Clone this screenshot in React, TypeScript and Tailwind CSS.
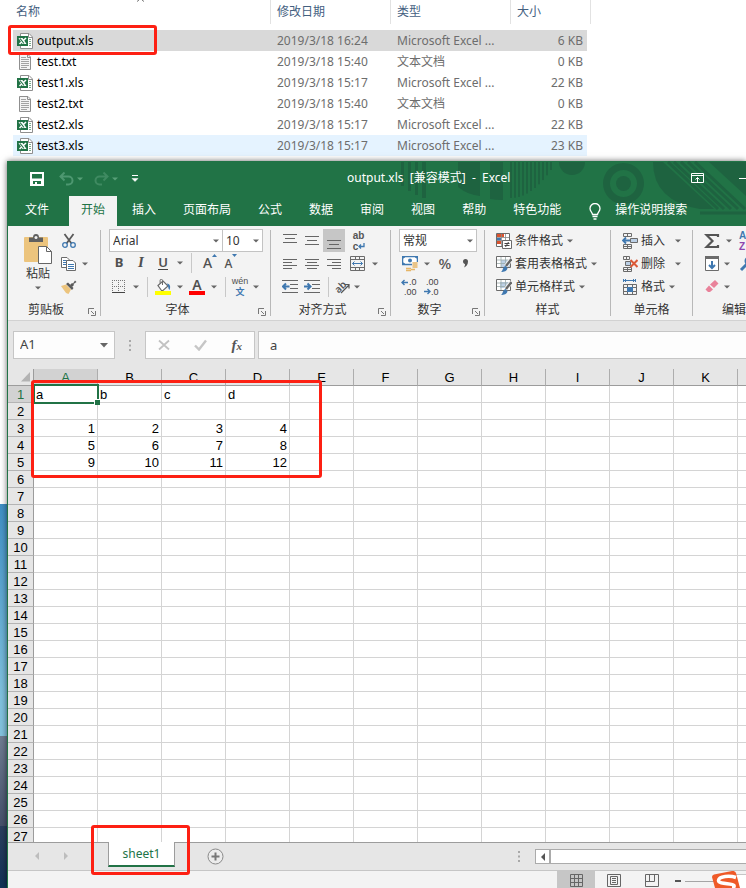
import React from 'react';

type Kids = { children?: React.ReactNode };

const BLUE = '#3f78b0';
const GREY = '#6b6b6b';

function Svg({ w = 16, h = 16, children }: Kids & { w?: number; h?: number }) {
  return (
    <svg width={w} height={h} viewBox={`0 0 ${w} ${h}`} fill="none" className="shrink-0" aria-hidden="true">
      {children}
    </svg>
  );
}

/* ---------- file list ---------- */

function XlsIcon() {
  return (
    <Svg>
      <path d="M3.500.5H12L15.500 4v11.500h-12z" fill="#fff" stroke="#8f8f8f" />
      <path d="M11.500.5V4.500h4" stroke="#8f8f8f" />
      <path d="M12 6.500h2M12 8.500h2M12 10.500h2M12 12.500h2" stroke="#79a98c" />
      <rect y="3" width="11" height="10" fill="#217346" />
      <path d="M1.500 5h4L9.500 11h-4z" fill="#fff" />
      <path d="M9 5L2.500 11" stroke="#fff" strokeWidth="1.600" />
      <path d="M3 5.500l4 5" stroke="#217346" strokeWidth="1.200" />
    </Svg>
  );
}

function TxtIcon() {
  return (
    <Svg>
      <path d="M2.500.5H11l2.500 2.500v12.500h-11z" fill="#f4f4f4" stroke="#8f8f8f" />
      <path d="M10.500.5v3h3" stroke="#8f8f8f" />
      <path d="M4 3.500h5M4 5.500h8M4 7.500h8M4 9.500h8M4 11.500h8M4 13.500h6" stroke="#a3a3a3" />
    </Svg>
  );
}

const files = [
  { name: 'output.xls', date: '2019/3/18 16:24', type: 'Microsoft Excel ...', size: '6 KB', tone: 'bg-[#d9d9d9]' },
  { name: 'test.txt', date: '2019/3/18 15:40', type: '文本文档', size: '0 KB', tone: '' },
  { name: 'test1.xls', date: '2019/3/18 15:17', type: 'Microsoft Excel ...', size: '22 KB', tone: '' },
  { name: 'test2.txt', date: '2019/3/18 15:40', type: '文本文档', size: '0 KB', tone: '' },
  { name: 'test2.xls', date: '2019/3/18 15:17', type: 'Microsoft Excel ...', size: '22 KB', tone: '' },
  { name: 'test3.xls', date: '2019/3/18 15:17', type: 'Microsoft Excel ...', size: '23 KB', tone: 'bg-[#e5f3ff]' },
];

function Explorer() {
  return (
    <section className="relative h-[161px] shrink-0 pl-[13px]">
      <svg className="absolute left-[136px] top-0" width="9" height="2" viewBox="0 0 9 2" aria-hidden="true">
        <path d="M1 1.500L3 0M8 1.500L6 0" stroke="#777" />
      </svg>
      <table className="w-[578px] table-fixed border-separate border-spacing-0 text-left">
        <colgroup>
          <col className="w-[258px]" />
          <col className="w-[120px]" />
          <col className="w-[120px]" />
          <col className="w-20" />
        </colgroup>
        <thead className="text-[#44607f]">
          <tr className="h-6">
            {['名称', '修改日期', '类型', '大小'].map((t, i) => (
              <th key={t} scope="col" className={`border-r border-[#e2e2e2] p-0 pb-px font-normal leading-5 ${i ? 'pl-1.5' : 'pl-[3px]'}`}>
                {t}
              </th>
            ))}
          </tr>
        </thead>
        <tbody className="text-[#6d6d6d]">
          <tr className="h-1.5">
            <td colSpan={4} className="p-0" />
          </tr>
          {files.map((f) => (
            <tr key={f.name} className="h-[21px]">
              <td className={`p-0 pl-1 text-black ${f.tone}`}>
                <span className="flex items-center gap-1">
                  {f.name.endsWith('xls') ? <XlsIcon /> : <TxtIcon />}
                  {f.name}
                </span>
              </td>
              <td className={`p-0 pl-1.5 ${f.tone}`}>{f.date}</td>
              <td className={`p-0 pl-1.5 ${f.tone}`}>{f.type}</td>
              <td className={`border-r-4 border-transparent bg-clip-padding p-0 pr-1 text-right ${f.tone}`}>{f.size}</td>
            </tr>
          ))}
        </tbody>
      </table>
      <Mark className="left-2 top-[25px] h-[30px] w-[149px]" />
    </section>
  );
}

/* red highlight frame */
function Mark({ className }: { className: string }) {
  return <div className={`pointer-events-none absolute z-20 rounded-[3px] border-3 border-[#fd2013] ${className}`} />;
}

/* ---------- title bar ---------- */

function Pattern() {
  const thin = [0, 1, 2, 3, 4, 5, 6, 7, 8, 9, 10];
  return (
    <svg className="absolute left-[392px] top-0" width="346" height="65" viewBox="400 161 346 65" aria-hidden="true">
      <g fill="#1e6340">
        <rect x="401" y="162" width="3" height="24" />
        <rect x="408" y="162" width="3" height="29" />
        <rect x="415" y="162" width="3" height="33" />
        <rect x="422" y="162" width="4" height="36" />
        <path d="M458 162h22v34q-12-1-22-9z" />
        <path d="M490 162h13v38q-8 0-13-1z" />
        {thin.map((i) => (
          <rect key={i} x={510 + i * 4} y="162" width="2" height={36 - i * i * 0.28} />
        ))}
        <path d="M559 162h26a13 13 0 0 1-26 0z" />
        <path fillRule="evenodd" d="M603 183.500a20.500 20.500 0 1 0 41 0a20.500 20.500 0 1 0-41 0zM610 183.500a13.500 13.500 0 1 1 27 0a13.500 13.500 0 1 1-27 0z" />
        <circle cx="623.500" cy="183.500" r="7.500" />
        <path d="M653 162h10l51 47h-14q-47-8-47-47z" />
        <path d="M709 162h37v34z" />
      </g>
      <path d="M668 162l50 47M674 162l50 47M681 162l50 47M688 162l50 47M695 162l50 47" stroke="#1e6340" strokeWidth="3" />
      <path d="M700 213h46" stroke="#1e6340" strokeWidth="3" />
    </svg>
  );
}

function Caret({ className = 'w-3', color = '#666' }: { className?: string; color?: string }) {
  return (
    <span className={`flex shrink-0 items-center justify-center ${className}`}>
      <Svg w={6} h={4}>
        <path d="M0 .5h6L3 3.500z" fill={color} />
      </Svg>
    </span>
  );
}

function TitleBar() {
  return (
    <div className="relative flex h-[35px] items-center pb-0.5">
      <div className="flex w-[339px] shrink-0 items-center pl-[22px] pt-0.5">
        <button aria-label="保存">
          <Svg w={14} h={14}>
            <path d="M0 0h14v14H0zM2 2v4.500h10V2zM3 9v3h2v-2h2v2h4V9z" fill="#fff" fillRule="evenodd" />
          </Svg>
        </button>
        <button aria-label="撤消" className="ml-[15px] flex items-center">
          <Svg w={15} h={14}>
            <path d="M1 4.500h8.500a4 4 0 0 1 0 8H7M5.500.5l-4 4l4 4" stroke="#4d9770" strokeWidth="2" />
          </Svg>
          <Caret color="#58a078" />
        </button>
        <button aria-label="恢复" className="ml-2 flex items-center">
          <Svg w={15} h={14}>
            <path d="M14 4.500H5.500a4 4 0 0 0 0 8H8M9.500.5l4 4l-4 4" stroke="#3f8a61" strokeWidth="2" />
          </Svg>
          <Caret color="#58a078" />
        </button>
        <button aria-label="自定义快速访问工具栏" className="ml-2.5">
          <Svg w={8} h={8}>
            <path d="M1 .5h6" stroke="#fff" />
            <path d="M1 3.500h6L4 6.500z" fill="#fff" stroke="#fff" strokeWidth=".5" />
          </Svg>
        </button>
      </div>
      <h1 className="relative whitespace-pre text-white">{'output.xls  [兼容模式]  -  Excel'}</h1>
      <div className="relative ml-auto flex items-center gap-[34px]">
        <button aria-label="功能区显示选项">
          <Svg w={13} h={10}>
            <path d="M.5.5h12v9H.5zM1 2.500h11M6.500 9V4.500M4.500 6.500l2-2l2 2" stroke="#fff" />
          </Svg>
        </button>
        <button aria-label="最小化">
          <Svg w={8} h={10}>
            <path d="M1 5.500h7" stroke="#fff" />
          </Svg>
        </button>
      </div>
    </div>
  );
}

const tabs = ['插入', '页面布局', '公式', '数据', '审阅', '视图', '帮助', '特色功能'];

function TabBar() {
  return (
    <nav className="relative flex h-[30px] items-stretch gap-[3px] whitespace-nowrap pl-[5px] text-white">
      <button className="mr-[5px] px-3 pb-0.5">文件</button>
      <button className="bg-[#f3f3f3] px-3 pb-0.5 text-[#217346]">开始</button>
      {tabs.map((t) => (
        <button key={t} className="px-3 pb-0.5">
          {t}
        </button>
      ))}
      <button className="ml-3 flex items-center gap-[13px] pb-0.5">
        <span className="pt-0.5">
          <Svg w={14} h={17}>
            <path d="M4.500 11.500c0-2-2.500-3-2.500-6a5 5 0 0 1 10 0c0 3-2.500 4-2.500 6zM4.500 13.500h5M5.500 16h3" stroke="#fff" strokeWidth="1.300" />
          </Svg>
        </span>
        操作说明搜索
      </button>
    </nav>
  );
}

/* ---------- ribbon ---------- */

function Launcher() {
  return (
    <button aria-label="对话框启动器" className="flex w-4 shrink-0 items-center justify-center pt-1">
      <Svg w={8} h={8}>
        <path d="M.5 6V.5H6M3 3l3 3M7.500 3v4.500H3" stroke="#777" />
      </Svg>
    </button>
  );
}

function Group({ label, width, launcher, children }: Kids & { label: string; width: string; launcher?: boolean }) {
  return (
    <section className={`flex shrink-0 flex-col pt-[3px] ${width}`}>
      {children}
      <div className="flex h-[22px] items-center pt-0.5 text-[#333]">
        <span className="flex-1 text-center">{label}</span>
        {launcher && <Launcher />}
      </div>
    </section>
  );
}

function Row({ className = '', children }: Kids & { className?: string }) {
  return <div className={`flex h-[23px] items-center ${className}`}>{children}</div>;
}

function Tool({ label, className = 'w-[22px]', children }: Kids & { label: string; className?: string }) {
  return (
    <button aria-label={label} className={`flex h-full shrink-0 items-center justify-center ${className}`}>
      {children}
    </button>
  );
}

const GroupLine = () => <div className="my-1 w-px shrink-0 bg-[#b8b8b8]" />;
const Divider = () => (
  <span className="flex h-5 w-2.5 shrink-0 justify-center">
    <span className="w-px bg-[#c8c8c8]" />
  </span>
);

function Picker({ label, value, className }: { label: string; value: string; className: string }) {
  return (
    <span className={`relative flex h-[23px] shrink-0 border border-[#c3c3c3] bg-white ${className}`}>
      <select aria-label={label} className="w-full appearance-none bg-transparent pl-[3px] text-[#333] outline-none">
        <option>{value}</option>
      </select>
      <span className="pointer-events-none absolute inset-y-0 right-0 flex">
        <Caret />
      </span>
    </span>
  );
}

function Lines({ y, x, w }: { y: number[]; x?: number[]; w?: number[] }) {
  return (
    <Svg>
      {y.map((v, i) => (
        <rect key={v} x={x ? x[i] : 1} y={v} width={w ? w[i] : 14} height="1" fill="#666" />
      ))}
    </Svg>
  );
}

function Clipboard() {
  return (
    <Group label="剪贴板" width="w-[92px]" launcher>
      <div className="flex h-[69px]">
        <button className="flex w-[53px] shrink-0 flex-col items-center pl-[7px] pt-[5px] text-[#333]">
          <Svg w={28} h={30}>
            <rect y="3" width="24" height="25" rx="1" fill="#ecc47d" />
            <path d="M5 8V3.500h4C9 1 10 0 12 0s3 1 3 3.500h4V8z" fill="#5f5f5f" />
            <circle cx="12" cy="3.500" r="1.500" fill="#f3f3f3" />
            <path d="M14.500 12.500h8l5 5v12h-13z" fill="#fff" stroke="#666" />
            <path d="M22.500 12.500v5h5" stroke="#666" />
          </Svg>
          <span className="whitespace-nowrap leading-5">粘贴</span>
          <Caret className="h-2 w-3" />
        </button>
        <div className="flex w-[38px] shrink-0 flex-col">
          <Row>
            <Tool label="剪切" className="w-4">
              <Svg>
                <path d="M3.500 1l7 9.500M12.500 1l-7 9.500" stroke="#595959" strokeWidth="1.800" />
                <circle cx="4" cy="12" r="2.300" stroke={BLUE} strokeWidth="1.300" />
                <circle cx="12" cy="12" r="2.300" stroke={BLUE} strokeWidth="1.300" />
              </Svg>
            </Tool>
          </Row>
          <Row>
            <Tool label="复制" className="w-4">
              <Svg>
                <path d="M.5 1.500H6l2.500 2.500v7.500h-8z" fill="#fff" stroke={GREY} />
                <path d="M2 4.500h4M2 6.500h4M2 8.500h4" stroke={BLUE} />
                <path d="M5.500 4.500H12l2.500 2.500v7.500h-9z" fill="#fff" stroke={GREY} />
                <path d="M7 8.500h6M7 10.500h6M7 12.500h6" stroke={BLUE} />
              </Svg>
            </Tool>
            <Caret className="ml-0.5 w-3" />
          </Row>
          <Row>
            <Tool label="格式刷" className="w-4">
              <Svg>
                <path d="M0 7l5-1.500 5 5L7.500 15 5 14z" fill="#ecc47d" />
                <path d="M5 5l2-1.500 5.500 5.500L11 11z" fill="#595959" />
                <path d="M9 6l2-2 1 .5L14 1.500l1.500 1.500-3 2 .5 1-2 2z" fill="#595959" />
              </Svg>
            </Tool>
          </Row>
        </div>
      </div>
    </Group>
  );
}

function FontGroup() {
  return (
    <Group label="字体" width="w-[169px]" launcher>
      <Row className="pl-2">
        <Picker label="字体" value="Arial" className="w-[114px]" />
        <Picker label="字号" value="10" className="-ml-px w-[41px]" />
      </Row>
      <Row className="pb-0.5 pl-[7px] text-[#505050]">
        <Tool label="加粗">
          <b className="text-[13px]">B</b>
        </Tool>
        <Tool label="倾斜">
          <i className="font-['Liberation_Serif',serif] text-[15px] font-bold">I</i>
        </Tool>
        <Tool label="下划线">
          <span className="border-b border-[#444] text-[13px] font-semibold leading-[14px]">U</span>
        </Tool>
        <Caret />
        <Divider />
        <Tool label="增大字号" className="w-6">
          <span className="pl-1 text-sm font-medium">A</span>
          <span className="self-start pt-0.5">
            <Svg w={5} h={4}>
              <path d="M0 3h5L2.500 0z" fill={BLUE} />
            </Svg>
          </span>
        </Tool>
        <Tool label="减小字号">
          <span className="pt-0.5 text-xs font-medium">A</span>
          <span className="self-start pt-0.5">
            <Svg w={5} h={4}>
              <path d="M0 0h5L2.500 3z" fill={BLUE} />
            </Svg>
          </span>
        </Tool>
      </Row>
      <Row className="pl-[7px] text-[#505050]">
        <Tool label="边框">
          <Svg w={14} h={14}>
            <path d="M0 .5h13M0 6.500h13M.5 0v13M6.500 0v13M12.500 0v13" stroke="#777" strokeDasharray="1 1" />
            <path d="M0 12.500h13" stroke="#444" />
          </Svg>
        </Tool>
        <Caret />
        <Divider />
        <Tool label="填充颜色">
          <Svg>
            <path d="M3 6.500L8 2l5 5-5 4.500H6.500z" fill="#fff" stroke={GREY} strokeWidth="1.200" />
            <path d="M7.500 6V1.500a1.200 1.200 0 0 0-2.400 0v3" stroke={GREY} />
            <path d="M12 4.500c3 .5 4 3 2.500 6.500-1.500-1-1-3-1.500-4z" fill={BLUE} />
            <rect y="12" width="16" height="4" fill="#ff0" />
          </Svg>
        </Tool>
        <Caret />
        <Tool label="字体颜色">
          <span className="flex w-4 flex-col items-center">
            <span className="text-sm font-semibold leading-3">A</span>
            <span className="h-1 w-4 bg-[#f00]" />
          </span>
        </Tool>
        <Caret />
        <Divider />
        <Tool label="显示拼音字段" className="w-5">
          <span className="flex flex-col items-center font-['Liberation_Sans','Noto_Sans_CJK_SC',sans-serif] text-[9px] leading-[11px]">
            <span>wén</span>
            <span className="font-bold text-[#3f78b0]">文</span>
          </span>
        </Tool>
        <Caret />
      </Row>
    </Group>
  );
}

function AlignGroup() {
  return (
    <Group label="对齐方式" width="w-[119px]" launcher>
      <Row className="pl-2">
        <Tool label="顶端对齐">
          <Lines y={[1, 5, 9]} x={[1, 3, 1]} w={[14, 10, 14]} />
        </Tool>
        <Tool label="垂直居中">
          <Lines y={[3, 7, 11]} x={[1, 3, 1]} w={[14, 10, 14]} />
        </Tool>
        <Tool label="底端对齐" className="w-[22px] bg-[#c6c6c6]">
          <Lines y={[7, 11, 15]} x={[1, 3, 1]} w={[14, 10, 14]} />
        </Tool>
        <Tool label="自动换行" className="w-7">
          <span className="text-left font-['Liberation_Sans',sans-serif] text-[10px] font-bold leading-[11px] text-[#555]">
            ab
            <span className="flex items-center">
              c
              <Svg w={7} h={7}>
                <path d="M6 0v3.500H1.500M3 1.500l-2 2l2 2" stroke={BLUE} strokeWidth="1.300" />
              </Svg>
            </span>
          </span>
        </Tool>
      </Row>
      <Row className="pl-2">
        <Tool label="左对齐">
          <Lines y={[3, 6, 9, 12]} w={[14, 9, 14, 9]} />
        </Tool>
        <Tool label="居中">
          <Lines y={[3, 6, 9, 12]} x={[1, 3, 1, 3]} w={[14, 10, 14, 10]} />
        </Tool>
        <Tool label="右对齐">
          <Lines y={[3, 6, 9, 12]} x={[1, 6, 1, 6]} w={[14, 9, 14, 9]} />
        </Tool>
        <Tool label="合并后居中" className="w-6">
          <Svg w={15} h={15}>
            <path d="M.5.5h14v14H.5zM0 3.500h15M0 11.500h15M5.500.5v3M9.500.5v3M5.500 11.500v3M9.500 11.500v3" stroke={GREY} />
            <path d="M2.500 7.500h10M4.500 5.500l-2 2l2 2M10.500 5.500l2 2l-2 2" stroke={BLUE} />
          </Svg>
        </Tool>
        <Caret />
      </Row>
      <Row className="pl-2">
        <Tool label="减少缩进量">
          <Svg>
            <path d="M0 1.500h16M8 5.500h8M8 9.500h8M0 13.500h16" stroke="#666" />
            <path d="M1 7.500h6.500M4 4.500L1 7.500l3 3" stroke={BLUE} strokeWidth="2" />
          </Svg>
        </Tool>
        <Tool label="增加缩进量">
          <Svg>
            <path d="M0 1.500h16M8 5.500h8M8 9.500h8M0 13.500h16" stroke="#666" />
            <path d="M0 7.500h6M3.500 4.500l3 3l-3 3" stroke={BLUE} strokeWidth="2" />
          </Svg>
        </Tool>
        <Divider />
        <Tool label="方向" className="w-[18px]">
          <Svg w={18} h={20}>
            <text x="2" y="14" fontSize="10" fontWeight="600" fill="#555" transform="rotate(-45 7 11)">
              ab
            </text>
            <path d="M8 16l8-8M12 7.500h4v4" stroke="#555" strokeWidth="1.200" />
          </Svg>
        </Tool>
        <Caret />
      </Row>
    </Group>
  );
}

function NumberGroup() {
  return (
    <Group label="数字" width="w-[93px]" launcher>
      <Row className="pl-2">
        <Picker label="数字格式" value="常规" className="w-[78px]" />
      </Row>
      <Row className="pl-2 text-[#555]">
        <Tool label="会计数字格式">
          <Svg>
            <rect x=".5" y=".5" width="15" height="8" fill="#fff" stroke={BLUE} strokeWidth="1.500" />
            <circle cx="8" cy="4.500" r="2" fill={BLUE} />
            <path d="M1 2.500V1h2M13 1h2v1.500M1 6.500V8h2" stroke={BLUE} strokeWidth="1.500" />
            <path d="M10 6h6v7h-6z" fill="#f3f3f3" />
            <path d="M10.500 7h5M10.500 9h5M10.500 11h5M4 12.500h5M4 14.500h5M9 13.500h4" stroke="#e6b566" strokeWidth="1.300" />
          </Svg>
        </Tool>
        <Caret />
        <Tool label="百分比样式" className="w-6">
          <span className="pb-0.5 text-[15px] font-medium">%</span>
        </Tool>
        <Tool label="千位分隔样式" className="w-[18px]">
          <Svg w={6} h={9}>
            <path d="M0 2.500a2.500 2.500 0 0 1 5 0C5 5.500 3.500 7.500 1 8.500c.8-1.300 1-2.300 1-3.500C1 5 0 4 0 2.500z" fill="#555" />
          </Svg>
        </Tool>
      </Row>
      <Row className="pl-2 font-['Liberation_Sans',sans-serif]">
        <Tool label="增加小数位数">
          <Svg w={18} h={22}>
            <path d="M1 6.500h6M3.500 4L1 6.500L3.500 9" stroke={BLUE} strokeWidth="1.400" />
            <text x="8" y="9" fontSize="9" fill="#444">.0</text>
            <text x="3" y="19" fontSize="9" fill="#444">.00</text>
          </Svg>
        </Tool>
        <Tool label="减少小数位数">
          <Svg w={18} h={22}>
            <path d="M1 15.500h6M4.500 13L7 15.500L4.500 18" stroke={BLUE} strokeWidth="1.400" />
            <text x="3" y="9" fontSize="9" fill="#444">.00</text>
            <text x="8" y="19" fontSize="9" fill="#444">.0</text>
          </Svg>
        </Tool>
      </Row>
    </Group>
  );
}

function Command({ text, icon, gap = '' }: { text: string; icon: React.ReactNode; gap?: string }) {
  return (
    <Row className="pl-[11px]">
      <button className="flex items-center gap-[3px] whitespace-nowrap text-[#333]">
        {icon}
        {text}
        <Caret className={`w-2 ${gap}`} />
      </button>
    </Row>
  );
}

function StyleSheetIcon({ fill }: { fill: string }) {
  return (
    <Svg>
      <path d="M.5.5h14v11H.5z" fill="#fff" stroke={GREY} />
      <path d={fill} fill="#bcd0e6" />
      <path d="M1 4h13M1 7.500h13M5 1v10M9.500 1v10" stroke="#9aa" strokeWidth=".8" />
      <path d="M15.500 2.500L10 10" stroke="#f3f3f3" strokeWidth="4" />
      <path d="M15.500 3L10 10" stroke="#666" strokeWidth="2.400" />
      <path d="M5 16c2-1 1.500-5 4.500-6l2 2.200C11 15 8 16 5 16z" fill={BLUE} />
    </Svg>
  );
}

function StylesGroup() {
  return (
    <Group label="样式" width="w-[125px]">
      <Command
        text="条件格式"
        icon={
          <Svg>
            <path d="M.5.5h13v13H.5z" fill="#fff" stroke={GREY} />
            <path d="M1 1h7v3H1zM1 8h4v3H1z" fill="#d9532f" />
            <path d="M1 5h4v2.500H1z" fill={BLUE} />
            <path d="M1 4.500h12M1 7.500h12M5.500 1v12M9.500 1v6" stroke="#888" strokeWidth=".8" />
            <path d="M6.500 7.500h9v8h-9z" fill="#fff" stroke={GREY} />
            <path d="M8.500 10.500h5M8.500 12.500h5M12.500 9l-3 5" stroke="#444" />
          </Svg>
        }
      />
      <Command text="套用表格格式" icon={<StyleSheetIcon fill="M5 4h9v7H5z" />} />
      <Command text="单元格样式" icon={<StyleSheetIcon fill="M4 3h9v6H4z" />} />
    </Group>
  );
}

function CellsGroup() {
  return (
    <Group label="单元格" width="w-[81px]">
      <Command
        text="插入"
        gap="ml-1.5"
        icon={
          <Svg>
            <path d="M1.500.5h8v3h-8zM5.500.5v3M1.500 11.500h8v4h-8zM5.500 11.500v4M1.500 13.500h8" stroke={GREY} />
            <path d="M8.500 5.500h7v4h-7z" fill="#bcd0e6" stroke={GREY} />
            <path d="M1 7.500h7M4 4.500l-3 3l3 3" stroke={BLUE} strokeWidth="1.800" />
          </Svg>
        }
      />
      <Command
        text="删除"
        gap="ml-1.5"
        icon={
          <Svg>
            <path d="M1.500.5h6v3h-6zM4.500.5v3M1.500 11.500h8v4h-8zM5.500 11.500v4M1.500 13.500h8" stroke={GREY} />
            <path d="M3.500 5.500h5v4h-5z" fill="#bcd0e6" stroke={GREY} />
            <path d="M8.500 4l7 7M15.500 4l-7 7" stroke="#dc5a38" strokeWidth="2" />
          </Svg>
        }
      />
      <Command
        text="格式"
        icon={
          <Svg>
            <path d="M1 1.500h13M1.500 0v3M13.500 0v3M4 0L2.500 1.500L4 3M11 0l1.500 1.500L11 3" stroke={BLUE} />
            <path d="M1.500 5.500h13v10h-13zM1 8.500h14M1 12.500h14M5.500 5v10M10.500 5v10" stroke={GREY} />
            <rect x="5" y="8" width="6" height="5" fill={BLUE} />
          </Svg>
        }
      />
    </Group>
  );
}

function EditGroup() {
  return (
    <Group label="编辑" width="w-[82px]">
      <Row className="pl-2">
        <Tool label="自动求和">
          <Svg>
            <path d="M14 4V2H2.500l6 6-6 6H14v-2" stroke="#555" strokeWidth="2.200" />
          </Svg>
        </Tool>
        <Caret />
        <Tool label="排序和筛选" className="ml-1">
          <span className="text-left font-['Liberation_Sans',sans-serif] text-[10px] font-bold leading-[11px]">
            <span className="block text-[#3f78b0]">A</span>
            <span className="block text-[#8e44ad]">Z</span>
          </span>
        </Tool>
      </Row>
      <Row className="pl-2">
        <Tool label="填充">
          <Svg>
            <path d="M1.500.5h13v14h-13z" fill="#fff" stroke={GREY} />
            <path d="M1 0h14v3H1z" fill={GREY} />
            <path d="M8 5v7M5 9l3 3l3-3" stroke={BLUE} strokeWidth="2" />
          </Svg>
        </Tool>
        <Caret className="w-2" />
        <Tool label="查找和选择" className="ml-2">
          <Svg>
            <circle cx="10" cy="5" r="3.500" stroke={BLUE} strokeWidth="2" />
            <path d="M8 8l-6 6" stroke={BLUE} strokeWidth="3" />
          </Svg>
        </Tool>
      </Row>
      <Row className="pl-2">
        <Tool label="清除">
          <Svg>
            <path d="M6 5.500L11 1l3.500 3.500-4.500 4.500z" fill="#e9829a" />
            <path d="M5 6.500l4 4L6 13H4L1.500 10.500z" fill="#e9829a" />
          </Svg>
        </Tool>
        <Caret className="w-2" />
      </Row>
    </Group>
  );
}

function Ribbon() {
  return (
    <div className="flex h-[95px] shrink-0 overflow-hidden border-b border-[#d2d2d2] bg-[#f3f3f3]">
      <Clipboard />
      <GroupLine />
      <FontGroup />
      <GroupLine />
      <AlignGroup />
      <GroupLine />
      <NumberGroup />
      <GroupLine />
      <StylesGroup />
      <GroupLine />
      <CellsGroup />
      <GroupLine />
      <EditGroup />
    </div>
  );
}

/* ---------- formula bar ---------- */

function Dots() {
  return (
    <Svg w={2} h={11}>
      <path d="M0 0h2v2H0zM0 4.500h2v2H0zM0 9h2v2H0z" fill="#a8a8a8" />
    </Svg>
  );
}

function FormulaBar() {
  return (
    <div className="flex shrink-0 items-center py-2.5 pl-[5px] text-[13px] text-[#444]">
      <div className="flex h-7 w-[102px] shrink-0 items-center border border-[#c6c6c6] bg-[#fdfdfd]">
        <input aria-label="名称框" defaultValue="A1" className="w-20 min-w-0 flex-1 bg-transparent pl-1.5 outline-none" />
        <button aria-label="展开名称" className="pr-1.5">
          <Svg w={8} h={5}>
            <path d="M0 0h8L4 4.500z" fill="#666" />
          </Svg>
        </button>
      </div>
      <span className="flex w-[30px] shrink-0 justify-center">
        <Dots />
      </span>
      <div className="flex h-7 w-[110px] shrink-0 items-center justify-around border border-[#c6c6c6] bg-[#fdfdfd]">
        <button aria-label="取消">
          <Svg w={12} h={12}>
            <path d="M1 1.500l10 9M11 1.500l-10 9" stroke="#c2c2c2" strokeWidth="1.800" />
          </Svg>
        </button>
        <button aria-label="输入">
          <Svg w={13} h={12}>
            <path d="M1 6.500l4 4L12 1.500" stroke="#c6c6c6" strokeWidth="2.400" />
          </Svg>
        </button>
        <button aria-label="插入函数" className="font-['Liberation_Serif',serif] italic font-bold leading-none text-[#555]">
          <span className="text-[15px]">f</span>
          <span className="text-[11px]">x</span>
        </button>
      </div>
      <input
        aria-label="编辑栏"
        defaultValue="a"
        className="ml-[3px] h-7 min-w-0 flex-1 border border-r-0 border-[#c6c6c6] bg-[#fdfdfd] pl-[11px] outline-none"
      />
    </div>
  );
}

/* ---------- sheet ---------- */

const letters = 'ABCDEFGHIJKLMNOPQRSTUVWXYZ'.split('');
const rows = Array.from({ length: 30 }, (_, i) => i + 1);
const cells: Record<number, (string | number)[]> = {
  1: ['a', 'b', 'c', 'd'],
  3: [1, 2, 3, 4],
  4: [5, 6, 7, 8],
  5: [9, 10, 11, 12],
};

function Sheet() {
  return (
    <div className="relative min-h-0 flex-1">
      <div className="h-full overflow-hidden">
        <table className="w-[1690px] table-fixed border-separate border-spacing-0 bg-white font-['Liberation_Sans',Arial,sans-serif] text-[13px] leading-[15px] text-black">
          <colgroup>
            <col className="w-[26px]" />
            {letters.map((l) => (
              <col key={l} className="w-16" />
            ))}
          </colgroup>
          <thead>
            <tr className="h-[17px]">
              <td className="border-b border-r border-[#9c9c9c] bg-[#e6e6e6] p-0">
                <span className="flex justify-end pr-[3px]">
                  <Svg w={9} h={10}>
                    <path d="M9 0v9.500H0z" fill="#b3b3b3" />
                  </Svg>
                </span>
              </td>
              {letters.map((l) => (
                <th
                  key={l}
                  scope="col"
                  className={`border-b border-r border-b-[#9c9c9c] border-r-[#adadad] p-0 pt-px font-normal ${l === 'A' ? 'bg-[#d2d2d2] text-[#217346]' : 'bg-[#e6e6e6]'}`}
                >
                  {l}
                </th>
              ))}
            </tr>
          </thead>
          <tbody>
            {rows.map((r) => (
              <tr key={r} className="h-[17px]">
                <th
                  scope="row"
                  className={`border-b border-r border-b-[#b4b4b4] border-r-[#9c9c9c] p-0 pt-px font-normal ${r === 1 ? 'bg-[#d2d2d2] text-[#217346]' : 'bg-[#e6e6e6]'}`}
                >
                  {r}
                </th>
                {letters.map((l, i) => {
                  const v = cells[r]?.[i];
                  return (
                    <td
                      key={l}
                      className={`relative border-b border-r border-[#d4d4d4] p-0 px-0.5 pt-px ${typeof v === 'number' ? 'text-right' : ''}`}
                    >
                      {v}
                      {r === 1 && i === 0 && (
                        <>
                          <span className="absolute -bottom-0.5 -left-px -right-0.5 -top-0.5 z-10 border-2 border-[#217346]" />
                          <span className="absolute -bottom-[3px] -right-[3px] z-10 size-1.5 border-l border-t border-white bg-[#217346]" />
                        </>
                      )}
                    </td>
                  );
                })}
              </tr>
            ))}
          </tbody>
        </table>
      </div>
      <Mark className="left-[23px] top-[11px] h-[98px] w-[291px]" />
    </div>
  );
}

function SheetTabs() {
  return (
    <div className="relative flex h-[29px] shrink-0 border-b border-[#c6c6c6] bg-[#e6e6e6]">
      <div className="flex w-[100px] shrink-0 items-center gap-[23px] border-t border-[#9c9c9c] pb-0.5 pl-[26px]">
        <button aria-label="上一个工作表">
          <Svg w={6} h={8}>
            <path d="M5 0v8L1 4z" fill="#bdbdbd" />
          </Svg>
        </button>
        <button aria-label="下一个工作表">
          <Svg w={6} h={8}>
            <path d="M1 0v8l4-4z" fill="#bdbdbd" />
          </Svg>
        </button>
      </div>
      <button className="mb-[3px] w-[67px] shrink-0 border-b-2 border-l border-r border-b-[#217346] border-l-[#9c9c9c] border-r-[#9c9c9c] bg-white pt-px text-[#217346]">
        sheet1
      </button>
      <div className="flex min-w-0 flex-1 items-center border-t border-[#9c9c9c]">
        <button aria-label="新工作表" className="ml-8 mr-[294px] shrink-0">
          <Svg w={17} h={17}>
            <circle cx="8.500" cy="8.500" r="7.500" stroke="#8a8a8a" fill="#ececec" />
            <path d="M8.500 4.500v8M4.500 8.500h8" stroke="#777" strokeWidth="2" />
          </Svg>
        </button>
        <Dots />
        <div className="ml-[15px] flex h-[15px] min-w-0 flex-1 border border-r-0 border-[#ababab] bg-white">
          <button aria-label="向左滚动" className="flex w-3.5 items-center justify-center border-r border-[#ababab]">
            <Svg w={4} h={8}>
              <path d="M4 0v8L0 4z" fill="#555" />
            </Svg>
          </button>
          <div className="flex-1 border-l border-[#ababab]" />
        </div>
      </div>
      <Mark className="-top-[17px] left-[83px] h-[50px] w-[99px]" />
    </div>
  );
}

function StatusBar() {
  return (
    <footer className="relative flex h-[17px] shrink-0 items-start bg-[#f3f3f3] pl-[549px]">
      <button aria-label="普通" className="flex h-full w-[38px] shrink-0 items-start justify-center bg-[#c6c6c6] pt-[3px]">
        <Svg w={13} h={13}>
          <path d="M.5.5h12v12H.5zM4.500.5v12M8.500.5v12M.5 4.500h12M.5 8.500h12" stroke="#666" />
        </Svg>
      </button>
      <button aria-label="页面布局" className="flex w-[38px] shrink-0 justify-center pt-[3px]">
        <Svg w={14} h={13}>
          <path d="M.5.5h13v12H.5zM3.500 2.500h7v8h-7zM5 4.500h4M5 6.500h4M5 8.500h4" stroke="#666" />
        </Svg>
      </button>
      <button aria-label="分页预览" className="flex w-[38px] shrink-0 justify-center pt-[3px]">
        <Svg w={14} h={13}>
          <path d="M.5.5h13v12H.5zM4.500.5v7M9.500.5v7M.5 7.500h9" stroke="#666" />
        </Svg>
      </button>
      <button aria-label="缩小" className="flex h-[17px] w-[22px] shrink-0 items-center pl-1 pt-0.5">
        <span className="h-0.5 w-1.5 bg-[#555]" />
      </button>
      <span className="-ml-2 mt-2.5 h-px min-w-0 flex-1 bg-[#a5a5a5]" />
      <div className="absolute right-0 top-[3px] h-[14px] w-4 border-t border-[#c6c6c6] bg-white" />
      <svg className="absolute right-0 top-0" width="34" height="17" viewBox="0 0 34 17" aria-hidden="true">
        <path d="M0 6Q0 4 2 3.500L20 0q3-.5 4 2l4 15H3z" fill="#ef5a28" />
        <path d="M24 6.500C18 4.500 7 5 6.500 9.500c0 4 14 2.500 15.500 5 .5 1.500-1 2.500-2 2.500" stroke="#fff" strokeWidth="3.500" fill="none" />
      </svg>
    </footer>
  );
}

export default function App() {
  return (
    <main className="relative flex h-screen flex-col overflow-hidden bg-white font-['Noto_Sans','Noto_Sans_CJK_SC',sans-serif] text-xs">
      <div className="absolute bottom-0 left-0 top-[504px] w-full bg-linear-to-b from-[#3f8fc4] via-[#7fc0dd] via-50% to-[#8fc6dd]">
        <div className="mt-[232px] h-[90px] w-full bg-linear-to-b from-[#6f7d92] to-[#45506a]" />
        <div className="h-full w-full bg-linear-to-b from-[#2b3f5e] to-[#123256] to-15%" />
      </div>
      <Explorer />
      <div className="relative ml-[7px] flex min-h-0 flex-1 flex-col border-l border-[#217346] bg-[#e6e6e6] shadow-[0_0_6px_rgba(0,0,0,0.6)]">
        <header className="relative shrink-0 overflow-hidden bg-[#217346]">
          <Pattern />
          <TitleBar />
          <TabBar />
        </header>
        <Ribbon />
        <FormulaBar />
        <Sheet />
        <SheetTabs />
        <StatusBar />
      </div>
    </main>
  );
}
